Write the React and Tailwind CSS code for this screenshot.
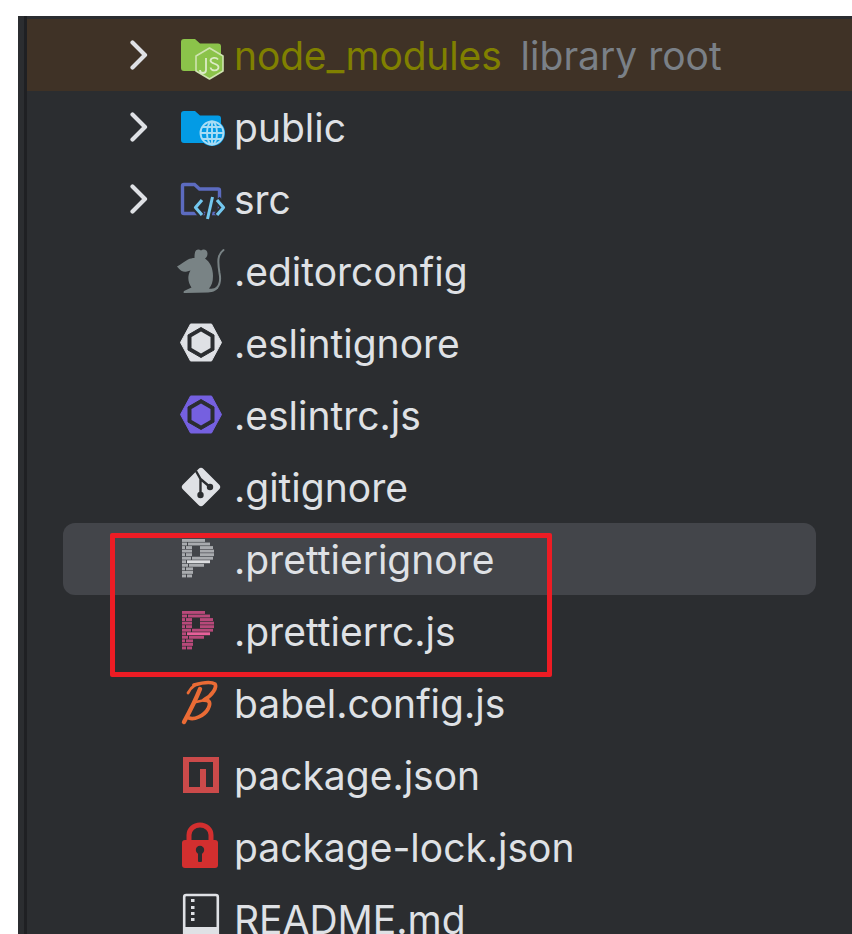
const Chevron = () => (
  <svg width="33" height="32" viewBox="0 0 33 32" className="shrink-0">
    <path d="M2.5 3.5 L15 16 L2.5 28.5" fill="none" stroke="#dfe1e5" strokeWidth="4.2" strokeLinecap="round" strokeLinejoin="round" />
  </svg>
);

const Svg = ({ children }) => (
  <svg width="44" height="44" viewBox="0 0 44 44" className="shrink-0 overflow-visible">{children}</svg>
);

const folder = "M1 9 a3 3 0 0 1 3-3 h11 l5 4.5 h18 a3 3 0 0 1 3 3 V35 a3 3 0 0 1-3 3 H4 a3 3 0 0 1-3-3 Z";

const NodeIcon = () => (
  <Svg>
    <path d={folder} fill="#8bc34a" />
    <path d="M29.5 15 L43 23 V38 L29.5 46 L16 38 V23 Z" fill="#8bc34a" stroke="#cfe3b0" strokeWidth="1.6" strokeLinejoin="round" />
    <path d="M26 25 V37 a3 3 0 0 1-6 0" fill="none" stroke="#dcebc6" strokeWidth="1.8" />
    <path d="M38 26.5 a4 3 0 0 0-7.5 1 c0 4 8 2.5 8 6.5 a4 3.2 0 0 1-8 .5" fill="none" stroke="#dcebc6" strokeWidth="1.8" />
  </Svg>
);

const PublicIcon = () => (
  <Svg>
    <path d={folder} fill="#039be5" />
    <circle cx="32" cy="28" r="13" fill="#039be5" />
    <g fill="none" stroke="#a8dcf5" strokeWidth="1.9">
      <circle cx="32" cy="28" r="11.5" />
      <ellipse cx="32" cy="28" rx="5" ry="11.5" />
      <path d="M32 16.5 V39.5 M20.5 28 H43.5 M22 22 H42 M22 34 H42" />
    </g>
  </Svg>
);

const SrcIcon = () => (
  <Svg>
    <path d="M2.5 9 a1.5 1.5 0 0 1 1.5-1.5 h10.5 l5 4.5 h18.5 a1.5 1.5 0 0 1 1.5 1.5 V35 a1.5 1.5 0 0 1-1.5 1.5 H4 a1.5 1.5 0 0 1-1.5-1.5 Z" fill="none" stroke="#5c6bc0" strokeWidth="3.4" />
    <path d="M22 22 L15.5 30.5 L22 39 M37 22 L43.5 30.5 L37 39" fill="none" stroke="#2b2d30" strokeWidth="7" />
    <path d="M32.5 19 L27.5 42" fill="none" stroke="#2b2d30" strokeWidth="7" />
    <path d="M22 23 L15.5 30.5 L22 38 M37 23 L43.5 30.5 L37 38" fill="none" stroke="#73c7ee" strokeWidth="3.2" strokeLinejoin="round" />
    <path d="M32.5 20 L27.5 42" fill="none" stroke="#73c7ee" strokeWidth="3" />
  </Svg>
);

const MouseIcon = () => (
  <Svg>
    <path d="M15 3.5 C15.5 0.5 18.5 -0.5 21 1.5 C23.5 -0.5 27.5 0.8 27.5 4.5 C27.5 7 26.5 8.5 25 9.5 C30 13 33 19 33 27 C33 33 31.5 37 29 39.5 C32 40 35 39.5 36.5 37.5 L38 39 C36 42 33 43 28 43.5 L5 44 C3 44 3 42.5 5 41.5 L11.5 38.5 C8 34 7 27 10.5 21.5 L7 22.5 C4 23.5 1 22.5 -3 17.5 C1 15.5 5 12 8 10.5 C10 9.5 12.5 9 14.5 9 C14.5 7 14.5 5 15 3.5 Z" fill="#798385" />
    <path d="M37 39 C40.5 35 40.5 29 39.5 24 C38.5 18 37.5 12 39 7.5 C39.8 5 41.5 2.5 43.5 1" fill="none" stroke="#798385" strokeWidth="2" strokeLinecap="round" />
  </Svg>
);

const EslintIcon = ({ outer, inner }) => (
  <Svg>
    <path d="M0.5 21.5 L10.5 3 H31.5 L41.5 21.5 L31.5 40 H10.5 Z" fill={outer} stroke={outer} strokeLinejoin="round" strokeWidth="1" />
    <path d="M21 6.5 L34 14 V29 L21 36.5 L8 29 V14 Z" fill="#2b2d30" stroke="#2b2d30" strokeLinejoin="round" />
    <path d="M21 10.5 L30.5 16 V27 L21 32.5 L11.5 27 V16 Z" fill={inner} />
  </Svg>
);

const GitIcon = () => (
  <Svg>
    <path d="M3 19.5 L18.5 4 a3.5 3.5 0 0 1 5 0 L39 19.5 a3.5 3.5 0 0 1 0 5 L23.5 40 a3.5 3.5 0 0 1-5 0 L3 24.5 a3.5 3.5 0 0 1 0-5 Z" fill="#dfe1e5" />
    <path d="M16 6 L20.5 14 V30 M20.5 14 L30 22" fill="none" stroke="#2b2d30" strokeWidth="2.4" />
    <circle cx="20.5" cy="30" r="3.2" fill="#2b2d30" />
    <circle cx="30" cy="22" r="3.2" fill="#2b2d30" />
  </Svg>
);

const pRows = [
  [[2, 23]],
  [[2, 5], [8, 22]],
  [[2, 3], [6, 6], [20, 13]],
  [[2, 10], [20, 14]],
  [[2, 3], [6, 6], [20, 14]],
  [[2, 9], [12, 21]],
  [[2, 4], [7, 23]],
  [[2, 6], [9, 15]],
  [[2, 3], [6, 7]],
  [[2, 11]],
  [[2, 4], [7, 5]],
];

const PrettierIcon = ({ color, bright }) => (
  <Svg>
    {pRows.map((segs, r) =>
      segs.map(([x, w], i) => (
        <rect key={`${r}-${i}`} x={x} y={2 + r * 3.55} width={w} height="2.9" fill={r === 6 && i === 1 ? bright : color} />
      ))
    )}
  </Svg>
);

const BabelIcon = () => (
  <Svg>
    <g fill="none" stroke="#ea6b35" strokeLinecap="round" strokeLinejoin="round">
      <path d="M14 4 C21 2 31 0.5 35 3 C37 6 33 14 24 19 C30 19 31 22 28 28 C24 35 14 39 9 37" strokeWidth="3.8" />
      <path d="M20 8 C16 18 10 30 4 41" strokeWidth="4.4" />
      <path d="M8 12 C10 8 12 6 15 4" strokeWidth="2.8" />
      <path d="M16 21 L25 19" strokeWidth="2.8" />
    </g>
  </Svg>
);

const NpmIcon = () => (
  <Svg>
    <rect x="3" y="4" width="36" height="36" fill="#cb4a4a" />
    <rect x="9" y="9" width="24" height="25" fill="#2b2d30" />
    <rect x="20" y="16" width="6" height="18" fill="#cb4a4a" />
  </Svg>
);

const LockIcon = () => (
  <Svg>
    <path d="M9 17 V10 a11 10 0 0 1 22 0 V17" fill="none" stroke="#d32f2f" strokeWidth="5" />
    <rect x="2" y="15" width="36" height="28" rx="3" fill="#d32f2f" />
    <circle cx="20" cy="25" r="4.2" fill="#2b2d30" />
    <rect x="18" y="26" width="4" height="11" rx="1" fill="#2b2d30" />
  </Svg>
);

const ReadmeIcon = () => (
  <Svg>
    <rect x="4.2" y="-2" width="33.6" height="50" rx="2" fill="none" stroke="#dfe1e5" strokeWidth="2.6" />
    <g fill="#dfe1e5">
      <rect x="11" y="2" width="3.5" height="3" />
      <rect x="11" y="9" width="3.5" height="3" />
      <rect x="11" y="15" width="3.5" height="3" />
      <rect x="11" y="21" width="3.5" height="3" />
      <rect x="4" y="30" width="34" height="18" />
    </g>
  </Svg>
);

const rows = [
  { name: "public", icon: <PublicIcon />, chevron: true },
  { name: "src", icon: <SrcIcon />, chevron: true },
  { name: ".editorconfig", icon: <MouseIcon /> },
  { name: ".eslintignore", icon: <EslintIcon outer="#dfe1e5" inner="#dfe1e5" /> },
  { name: ".eslintrc.js", icon: <EslintIcon outer="#7560e0" inner="#7560e0" /> },
  { name: ".gitignore", icon: <GitIcon /> },
  { name: ".prettierignore", icon: <PrettierIcon color="#a9abaf" bright="#dcdde0" />, selected: true },
  { name: ".prettierrc.js", icon: <PrettierIcon color="#b8497a" bright="#e8609a" /> },
  { name: "babel.config.js", icon: <BabelIcon /> },
  { name: "package.json", icon: <NpmIcon /> },
  { name: "package-lock.json", icon: <LockIcon /> },
  { name: "README.md", icon: <ReadmeIcon /> },
];

const Row = ({ name, icon, chevron, selected }) => (
  <div className="h-[72px] shrink-0 px-9">
    <div className={`h-full flex items-center pl-[67px] rounded-xl ${selected ? "bg-[#43454a]" : ""}`}>
      <div className="w-[50px] shrink-0">{chevron ? <Chevron /> : null}</div>
      <div className="w-[54px] shrink-0 flex">{icon}</div>
      <span className="text-[39px] leading-none text-[#dfe1e5] whitespace-nowrap">{name}</span>
    </div>
  </div>
);

export default function App() {
  return (
    <div className="h-[934px] w-[852px] overflow-hidden bg-white pl-[18px] pt-4" style={{ fontFamily: "Inter, 'Noto Sans', sans-serif" }}>
      <div className="relative h-full flex bg-[#2b2d30]">
        <div className="w-[6px] shrink-0 bg-[#2b2d30]" />
        <div className="w-[3px] shrink-0 bg-[#1f2023]" />
        <div className="flex-1 min-w-0 pt-[3px] flex flex-col">
          <div className="h-[72px] shrink-0 bg-[#3f3226] px-9">
            <div className="h-full flex items-center pl-[67px]">
              <div className="w-[50px] shrink-0"><Chevron /></div>
              <div className="w-[54px] shrink-0 flex"><NodeIcon /></div>
              <span className="text-[39px] tracking-[-0.15px] leading-none text-[#808000] whitespace-nowrap">node_modules</span>
              <span className="ml-[19px] text-[39px] leading-none text-[#7a8087] whitespace-nowrap">library root</span>
            </div>
          </div>
          {rows.map((r) => <Row key={r.name} {...r} />)}
        </div>
        <div className="absolute left-[92px] top-[517px] w-[442px] h-[144px] border-[5px] border-[#ed1c24] rounded-[2px]" />
      </div>
    </div>
  );
}
